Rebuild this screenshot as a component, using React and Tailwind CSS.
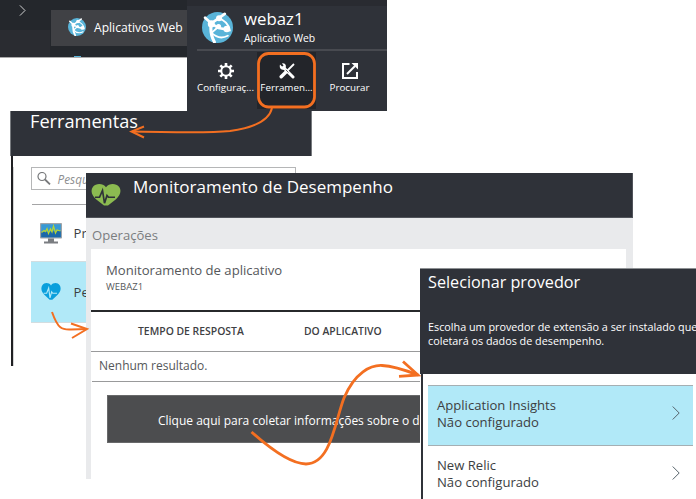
import React from "react";

function AppGlobe({ className }) {
  return (
    <svg className={className} viewBox="0 0 30 30">
      <circle cx="15" cy="15" r="15" fill="#59b4d9" />
      <g stroke="#fff" fill="none" strokeLinecap="round">
        <path d="M3 5.500 L9 11 L17 5.500 L22 1.800" strokeWidth="2.600" />
        <path d="M9 11 C8 17 8 22 12 29" strokeWidth="3" />
        <path d="M9 11 L16 15.500 L24 17" strokeWidth="2.400" />
        <path d="M16 6 C22 8 26 12 27 18" strokeWidth="1.800" />
        <path d="M9 20 C13 24 19 26 25 23" strokeWidth="1.800" />
        <path d="M15 15 L9.500 20" strokeWidth="1.800" />
      </g>
      <circle cx="16.500" cy="6" r="2.900" fill="#fff" />
      <circle cx="9" cy="11.500" r="3.400" fill="#fff" />
      <circle cx="16" cy="14" r="2.500" fill="#fff" />
      <circle cx="24" cy="16.500" r="3.200" fill="#fff" />
    </svg>
  );
}

function HeartPulse({ className, color, line }) {
  return (
    <svg className={className} viewBox="0 0 30 24" preserveAspectRatio="none">
      <path
        d="M15 3.500 C18 -1 25 -1 28 3 C31 7.500 29 12.500 25 16.500 L17 23.500 H13 L5 16.500 C1 12.500 -1 7.500 2 3 C5 -1 12 -1 15 3.500Z"
        fill={color}
      />
      <path
        d="M4 14.500 H8.500 L11.500 7 L13.500 21 L16 12.500 L17.500 14.500 H24"
        fill="none"
        stroke={line}
        strokeWidth="1.700"
      />
    </svg>
  );
}

function MonitorIcon() {
  return (
    <svg className="h-[21px] w-[22px] shrink-0" viewBox="0 0 22 21">
      <rect width="22" height="15.500" rx="0.800" fill="#9fa3a8" />
      <rect x="1.200" y="1.200" width="19.600" height="13" fill="#3799d4" />
      <path d="M1.200 9 L20.800 8 V14.200 H1.200Z" fill="#1b68a8" />
      <path
        d="M1.500 9.500 L4 7.500 L5.500 8.500 L7 5.500 L8.500 10.500 L10.500 6 L12 9 L13.500 3 L15.500 10 L17 7 L20.500 8"
        fill="none"
        stroke="#b8d432"
        strokeWidth="1.200"
      />
      <path d="M8 15.500 H14 V18.500 H18 V20.500 H4 V18.500 H8Z" fill="#7a7d81" />
    </svg>
  );
}

function GearIcon() {
  return (
    <svg className="h-4 w-4" viewBox="0 0 16 16">
      <circle cx="8" cy="8" r="4.700" fill="none" stroke="#fff" strokeWidth="2" />
      <g stroke="#fff" strokeWidth="2.600">
        <path d="M8 0V3M8 13V16M0 8H3M13 8H16M2.300 2.300L4.400 4.400M11.600 11.600L13.700 13.700M13.700 2.300L11.600 4.400M4.400 11.600L2.300 13.700" />
      </g>
    </svg>
  );
}

function ToolsIcon() {
  return (
    <svg className="h-4 w-4" viewBox="0 0 16 16">
      <path d="M4.500 4.500 L14 14" stroke="#fff" strokeWidth="3" strokeLinecap="round" />
      <path
        d="M1 1.500 L3.300 3.800 L4.500 2.800 L3 0.300 C6 0 7.500 2 6.800 4.500 L5 6.800 C2 7 0 5 1 1.500Z"
        fill="#fff"
      />
      <path d="M15 1 L8 8" stroke="#fff" strokeWidth="1.800" />
      <path d="M7 9 L2.200 13.800" stroke="#fff" strokeWidth="3.400" strokeLinecap="round" />
      <path d="M6.800 6.800 L9.500 9.500" stroke="#24262b" strokeWidth="0.700" />
    </svg>
  );
}

function BrowseIcon() {
  return (
    <svg className="h-4 w-4" viewBox="0 0 16 16" fill="none" stroke="#fff" strokeWidth="2">
      <path d="M7.500 1 H1 V15 H15 V9" />
      <path d="M5 11 L13 3" />
      <path d="M9.500 0 H16 V6.500Z" fill="#fff" stroke="none" />
    </svg>
  );
}

function Chevron({ className }) {
  return (
    <svg className={className} viewBox="0 0 8 14" fill="none" stroke="currentColor">
      <path d="M0.700 0.500 L7.200 7 L0.700 13.500" />
    </svg>
  );
}

function Command({ icon, label, textClass, active }) {
  return (
    <div
      className={
        "flex h-[57px] w-[59px] flex-col items-center pt-[11px] " + (active ? "bg-[#23252a]" : "")
      }
    >
      {icon}
      <span className={"mt-[1px] leading-4 " + textClass}>{label}</span>
    </div>
  );
}

function Provider({ name, nameClass, selected }) {
  return (
    <div
      className={
        "flex h-[60px] w-[265px] items-center justify-between border-t border-[#a5afb3] pr-[13px] pl-[9px] text-[13.1px] leading-[17px] text-[#3c3e42] " +
        (selected ? "bg-[#b1e9f8]" : "bg-white")
      }
    >
      <div className="pb-[3px]">
        <div className={nameClass}>{name}</div>
        <div>Não configurado</div>
      </div>
      <Chevron className="mt-[-5px] h-3.5 w-2 text-[#55636a]" />
    </div>
  );
}

export default function App() {
  return (
    <div className="relative h-[499px] w-[696px] overflow-hidden bg-white font-['Open_Sans',sans-serif] whitespace-nowrap">
      {/* Navigation blade */}
      <section className="absolute top-0 left-0 flex h-[58px] w-[187px] border-b border-[#aaa9aa] bg-[#24272c]">
        <div className="h-full w-[50px]">
          <div className="h-[30px] pt-[5px] pl-[19px]">
            <Chevron className="h-[11px] w-[7px] text-white" />
          </div>
          <div className="h-[27px] bg-[#2a2c31]" />
        </div>
        <div className="flex flex-1 flex-col pt-2.5 pl-px">
          <div className="flex h-9 items-center bg-[#404145] pl-[17px] text-white">
            <AppGlobe className="mt-[-3px] h-[18px] w-[18px]" />
            <span className="ml-[8px] text-[12.1px] leading-5">Aplicativos Web</span>
          </div>
          <div className="mt-auto ml-[23px] h-px w-[7px] bg-[#59b4d9]" />
        </div>
      </section>

      {/* Tools blade */}
      <section className="absolute top-[111px] left-[10px] h-[255px] w-[302px]">
        <header className="h-[45px] border-r border-l border-[#777a7e] bg-[#2f3239] pl-[19px] text-[18.2px] leading-5 text-white">
          Ferramentas
        </header>
        <div className="ml-px h-[210px] border-l-2 border-[#1f2023] pt-[11px]">
          <div className="ml-[-0.500px] h-full border-l border-[#d5d5d5] pl-[17px]">
            <div className="flex h-[23px] w-[265px] items-center border-[1.500px] border-[#b5b6b7] pl-[5px]">
              <svg className="h-[13px] w-[14px]" viewBox="0 0 14 13" fill="none" stroke="#77797b">
                <circle cx="5" cy="4.500" r="4" strokeWidth="1.200" />
                <path d="M8 7.500 L13 12.300" strokeWidth="1.800" />
              </svg>
              <span className="ml-[7px] text-[11.800px] leading-4 text-[#8e8f91] italic">Pesquisar</span>
            </div>
            <div className="mt-[14px] ml-px h-px w-[70px] bg-[#a5a5a6]" />
            <div className="flex h-14 items-center pl-[9px] text-[13.1px] text-[#3c3e42]">
              <MonitorIcon />
              <span className="ml-3 leading-5">Processos</span>
            </div>
            <div className="flex h-[62px] items-center border-y border-[#d3dde0] bg-[#b1e9f8] pl-[10px] text-[13.1px] text-[#3c3e42]">
              <HeartPulse className="mt-[-2px] h-[17px] w-5" color="#0a9fdc" line="#b1e9f8" />
              <span className="ml-[13px] leading-5">Performance</span>
            </div>
          </div>
        </div>
      </section>

      {/* Web app blade */}
      <section className="absolute top-0 left-[187px] h-[111px] w-[200px] border-t-[6px] border-[#292b31] bg-[#2f3239] text-white">
        <div className="ml-[10px] flex h-[45px] border-b-2 border-[#484a50] pt-[6px] pl-[5px]">
          <AppGlobe className="h-[31px] w-[31px]" />
          <div className="ml-[11px]">
            <div className="mt-[-3px] text-[16.8px] leading-5">webaz1</div>
            <div className="mt-px text-[10.4px] leading-4">Aplicativo Web</div>
          </div>
        </div>
        <div className="ml-[9px] flex pt-px">
          <Command icon={<GearIcon />} label="Configuraç..." textClass="text-[9.800px]" />
          <div className="w-[2px]" />
          <Command icon={<ToolsIcon />} label="Ferramen..." textClass="text-[9.800px]" active />
          <div className="w-[4px]" />
          <Command icon={<BrowseIcon />} label="Procurar" textClass="text-[9.800px]" />
        </div>
      </section>

      {/* Performance monitoring blade */}
      <section className="absolute top-[173px] left-[86px] flex h-[306px] w-[547px] flex-col bg-[#e9eaec]">
        <header className="flex h-[45px] border-r border-b border-[#50535a] bg-[#2f3239] pl-[5px] text-white">
          <HeartPulse className="mt-[11px] h-[22px] w-[30px]" color="#8cbb51" line="#2f3239" />
          <span className="ml-[12px] text-[17px] leading-[27px]">Monitoramento de Desempenho</span>
        </header>
        <div className="h-[31px] pl-[6px] text-[13.1px] leading-[34px] text-[#7b7d80]">Operações</div>
        <div className="ml-[5px] w-[535px] flex-1 bg-white text-[#55575a]">
          <div className="h-[61px] pt-[11px] pl-[15px]">
            <div className="text-[13.1px] leading-5">Monitoramento de aplicativo</div>
            <div className="text-[9.500px] leading-[14px]">WEBAZ1</div>
          </div>
          <div className="flex h-[42px] items-center border-t-2 border-b border-t-[#27292b] border-b-[#999a9b] pl-[47px] text-[10.400px] font-semibold text-[#3e4043]">
            <span className="w-[166px]">TEMPO DE RESPOSTA</span>
            <span>DO APLICATIVO</span>
          </div>
          <div className="ml-px h-[30px] border-b border-[#999a9b] pl-[7px] text-[12px] leading-[28px]">
            Nenhum resultado.
          </div>
          <div className="mt-[13px] ml-4 h-12 border border-[#68696a] bg-[#4c4d4f] pl-[50px] text-[12px] leading-[49px] text-white">
            Clique aqui para coletar informações sobre o desempenho
          </div>
        </div>
      </section>

      {/* Provider selection blade */}
      <section className="absolute top-[268px] left-[420px] h-[231px] w-[276px] bg-white">
        <header className="h-[106px] border-t border-[#8e9194] bg-[#2f3239] pl-[8px] text-white">
          <h1 className="pt-[3px] text-[16.2px] leading-5">Selecionar provedor</h1>
          <p className="mt-[28px] text-[10.800px] leading-[14px]">
            Escolha um provedor de extensão a ser instalado que
            <br />
            coletará os dados de desempenho.
          </p>
        </header>
        <div className="ml-px h-[125px] border-l-2 border-[#2f3239] pt-[11px] pl-[5px]">
          <Provider name="Application Insights" nameClass="" selected />
          <Provider name="New Relic" nameClass="" />
        </div>
      </section>

      {/* Step annotations */}
      <svg
        className="pointer-events-none absolute inset-0 h-[499px] w-[696px]"
        viewBox="0 0 696 499"
        fill="none"
        stroke="#f36f21"
      >
        <rect x="258.500" y="53.500" width="56" height="53.500" rx="10" strokeWidth="2.800" />
        <path d="M272 108 C269 121 252 128 230 131 C205 133.500 175 132 132 131.500" strokeWidth="2" />
        <path d="M144 126.500 L131.500 131.500 L144 137.500" strokeWidth="2" />
        <path d="M52 312 C58 329 62 330 71 329.500 L87 329" strokeWidth="2" />
        <path d="M71 323.500 L87 329 L72 338" strokeWidth="2" />
        <path
          d="M251.500 432 C275 453 293 464 306 464 C331 464 335 421 344 398 C355 372 371 365 382 365.500 C394 366 405 370 418 375"
          strokeWidth="2.800"
        />
        <path d="M403 361.500 L418 375 L399 376.300" strokeWidth="2.800" />
      </svg>
    </div>
  );
}
